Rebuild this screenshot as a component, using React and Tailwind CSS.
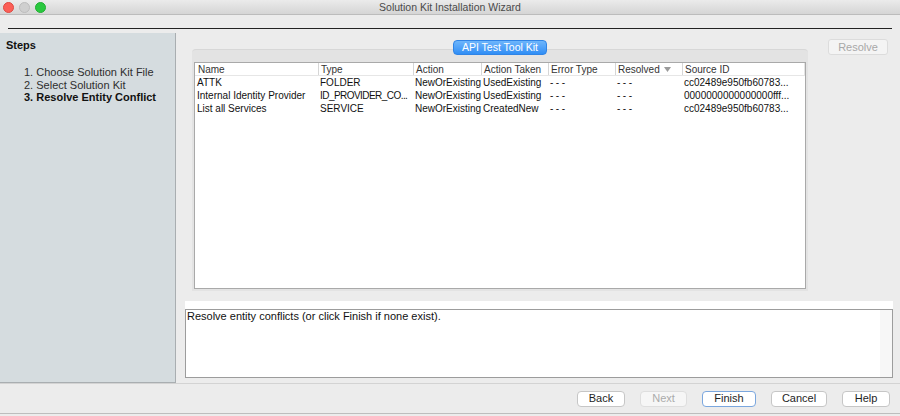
import React from 'react'

const columns = ['Name', 'Type', 'Action', 'Action Taken', 'Error Type', 'Resolved', 'Source ID']

const rows = [
    ['ATTK', 'FOLDER', 'NewOrExisting', 'UsedExisting', '---', '---', 'cc02489e950fb60783...'],
    ['Internal Identity Provider', 'ID_PROVIDER_CO...', 'NewOrExisting', 'UsedExisting', '---', '---', '0000000000000000fff...'],
    ['List all Services', 'SERVICE', 'NewOrExisting', 'CreatedNew', '---', '---', 'cc02489e950fb60783...'],
]

const steps = [
    { label: '1. Choose Solution Kit File', active: false },
    { label: '2. Select Solution Kit', active: false },
    { label: '3. Resolve Entity Conflict', active: true },
]

// same column template for header and body rows
const gridCols = 'grid grid-cols-[123px_95px_68px_67px_67px_67px_122px_1px]'

const cellSpacing = (cell, i) => {
    if (cell === '---') return 'tracking-[2.5px]'
    if (i === 1 && cell.length > 14) return 'tracking-[-0.55px]'
    return ''
}

const Button = ({ label, width, disabled, primary }) => (
    <button
        className={`${width} h-[16px] rounded-[4px] border text-[11px] leading-none flex items-center justify-center ${disabled
            ? 'bg-[#f6f6f6] border-[#dedede] text-[#ababab]'
            : primary
                ? 'bg-white border-[#7ba7de] text-[#1e1e1e]'
                : 'bg-white border-[#c6c6c6] text-[#1e1e1e]'
            }`}
    >
        {label}
    </button>
)

const App = () => {
    return (
        <div className="w-[900px] h-[416px] bg-[#ececec] flex flex-col overflow-hidden font-['Liberation_Sans',Arial,sans-serif] text-[#1c1c1c]">
            {/* window title bar */}
            <div className="h-[15px] shrink-0 grid grid-cols-[1fr_auto_1fr] items-center bg-gradient-to-b from-[#ebebeb] to-[#d5d5d5] border-b border-[#bcbcbc]">
                <div className="flex items-center gap-[5px] pl-[3px]">
                    <span className="w-[11px] h-[11px] rounded-full bg-[#fc5f57] border border-[#de4a42]"></span>
                    <span className="w-[11px] h-[11px] rounded-full bg-[#cfcfcf] border border-[#bdbdbd]"></span>
                    <span className="w-[11px] h-[11px] rounded-full bg-[#2ac83f] border border-[#1fae32]"></span>
                </div>
                <span className="text-[10.5px] leading-none text-[#4a4a4a]">Solution Kit Installation Wizard</span>
                <div></div>
            </div>

            {/* separator under title */}
            <div className="shrink-0 px-[8px] pt-[13px] pb-[4px]">
                <div className="h-px bg-[#222]"></div>
            </div>

            <div className="flex-1 flex min-h-0">
                {/* Steps sidebar */}
                <div className="w-[176px] shrink-0 bg-[#d5dcdf] border-r border-b border-[#a9aeb1] pl-[6px] pt-[6px]">
                    <p className="text-[11px] leading-[13px] font-bold text-[#111]">Steps</p>
                    <ul className="mt-[14px] ml-[18px] flex flex-col">
                        {steps.map(step => (
                            <li
                                key={step.label}
                                className={`text-[11px] leading-[12.5px] whitespace-nowrap ${step.active ? 'font-bold text-[#111]' : 'text-[#2e2e2e]'}`}
                            >
                                {step.label}
                            </li>
                        ))}
                    </ul>
                </div>

                {/* content */}
                <div className="flex-1 flex flex-col">
                    <div className="flex items-start">
                        <div className="ml-[16px] w-[616px] flex flex-col items-center">
                            <div className="relative z-10 mt-[7px] -mb-[6px] h-[15px] px-[8px] rounded-[4px] bg-gradient-to-b from-[#6db5fb] to-[#2f8ef5] border border-[#2f84e6] flex items-center text-[10.5px] text-white leading-none whitespace-nowrap">
                                API Test Tool Kit
                            </div>
                            <div className="w-full h-[242px] bg-[#e3e3e3] rounded-t-[4px] border-t border-[#d7d7d7] pt-[12px] px-[2px] pb-[2px]">
                                <div className="h-full bg-white border border-[#a9a9a9] text-[10px]">
                                    <div className={`${gridCols} h-[13px] items-center border-b border-[#e6e6e6] text-[#333]`}>
                                        {columns.map((col, i) => (
                                            <div
                                                key={col}
                                                className={`h-full flex items-center whitespace-nowrap overflow-hidden ${i === 0 ? 'pl-[3px]' : 'pl-[2px] border-l border-[#d6d6d6]'}`}
                                            >
                                                {col}
                                                {col === 'Resolved' && (
                                                    <svg className="ml-[4px]" width="7" height="5" viewBox="0 0 7 5">
                                                        <path d="M0 0 H7 L3.5 5 Z" fill="#9a9a9a" />
                                                    </svg>
                                                )}
                                            </div>
                                        ))}
                                        <div className="h-full bg-[#e4e4e4]"></div>
                                    </div>
                                    {rows.map(row => (
                                        <div key={row[0]} className={`${gridCols} h-[13px] items-center text-[#111]`}>
                                            {row.map((cell, i) => (
                                                <div
                                                    key={i}
                                                    className={`pl-[2px] whitespace-nowrap leading-[13px] ${cellSpacing(cell, i)}`}
                                                >
                                                    {cell}
                                                </div>
                                            ))}
                                        </div>
                                    ))}
                                </div>
                            </div>
                        </div>
                        <button className="ml-[20px] mt-[6px] w-[60px] h-[16px] rounded-[3px] bg-[#f4f4f4] border border-[#dcdcdc] text-[11px] leading-none text-[#a8a8a8]">
                            Resolve
                        </button>
                    </div>

                    {/* description */}
                    <div className="mt-[10px] ml-[9px] mr-[7px] flex flex-col">
                        <div className="h-[8px] bg-white"></div>
                        <div className="h-[69px] border border-[#9c9c9c] bg-white flex">
                            <p className="flex-1 pl-[1px] text-[11px] leading-[13px] text-[#111]">Resolve entity conflicts (or click Finish if none exist).</p>
                            <div className="w-[12px] bg-[#f7f7f7]"></div>
                        </div>
                    </div>
                </div>
            </div>

            {/* footer buttons */}
            <div className="shrink-0 h-[33px] pb-[2px]">
                <div className="h-full border-t border-b border-t-[#d3d3d3] border-b-[#bdbdbd] flex items-center justify-end pr-[10px] gap-[15px]">
                    <Button label="Back" width="w-[48px]" />
                    <Button label="Next" width="w-[47px]" disabled />
                    <Button label="Finish" width="w-[54px]" primary />
                    <Button label="Cancel" width="w-[56px]" />
                    <Button label="Help" width="w-[48px]" />
                </div>
            </div>
        </div>
    )
}

export default App
